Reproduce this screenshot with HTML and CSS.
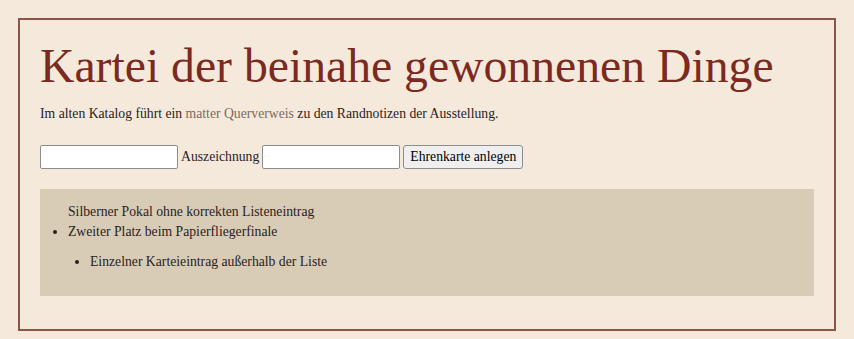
FILE: index.html
```html
<html>

<head>
	<meta charset="utf-8">
	<link rel="stylesheet" href="styles.css">
</head>

<body>

	<div class="sheet">
		<h1>Kartei der beinahe gewonnenen Dinge</h1>
		<p class="intro">Im alten Katalog führt ein <a href="#" class="muted">matter Querverweis</a> zu den Randnotizen der Ausstellung.</p>

		<form class="entry">
			<input type="text">
			<label>Auszeichnung</label>
			<input type="text">
			<button type="button">Ehrenkarte anlegen</button>
		</form>

		<div class="drawer">
			<ul>
				<li class="bare">Silberner Pokal ohne korrekten Listeneintrag</li>
				<li>Zweiter Platz beim Papierfliegerfinale</li>
				<ul>
					<li>Einzelner Karteieintrag außerhalb der Liste</li>
				</ul>
			</ul>
		</div>
	</div>

</body>

</html>
```

FILE: styles.css
```css
* {
	box-sizing: border-box;
}

html {
	font-family: "Liberation Serif", serif;
	font-size: 13.7px;
	background: #f4e9db;
	color: #2b211b;
}

body {
	margin: 18px;
}

.sheet {
	border: 2px solid #8a5745;
	padding: 0 20px 33px 20px;
}

h1 {
	font-weight: normal;
	font-size: 47.7px;
	color: #7b2a22;
	margin: 20px 0 14px 0;
	line-height: 52px;
	white-space: nowrap;
}

.intro {
	margin: 0 0 23px 0;
}

.muted {
	color: #7d6b5d;
	text-decoration: none;
}

.entry {
	display: flex;
	align-items: center;
	gap: 3px;
	margin: 0 0 20px 0;
}

.entry input {
	width: 138px;
	height: 24px;
	border: 1px solid #8d8d8d;
	border-radius: 2px;
	background: #fff;
}

.entry button {
	font-family: inherit;
	font-size: 13.7px;
	height: 24px;
	padding: 0 6px;
	border: 1px solid #8d8d8d;
	border-radius: 3px;
	background: #efefef;
	color: #000;
}

.drawer {
	background: #d8ccb6;
	padding: 13px 0 24px 0;
}

.drawer ul {
	margin: 0;
	padding-left: 28px;
	line-height: 20px;
}

.drawer ul ul {
	margin: 10px 0 0 0;
	padding-left: 22px;
	list-style: disc;
}

.bare {
	list-style: none;
}
```
